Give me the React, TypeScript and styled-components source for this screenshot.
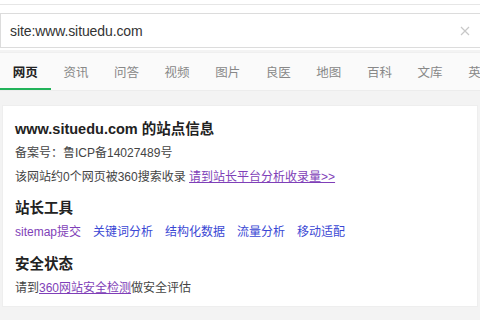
import React from "react";
import styled, { createGlobalStyle } from "styled-components";

const Global = createGlobalStyle`
  html, body { margin: 0; padding: 0; }
  body {
    width: 480px;
    height: 320px;
    overflow: hidden;
    background: #f3f3f3;
    font-family: "Liberation Sans", "Noto Sans CJK SC", Arial, sans-serif;
    color: #333;
  }
`;

const Header = styled.div`
  background: #fff;
  border-top: 4px solid #fff;
  box-shadow: inset 0 1px 0 #e6e6e6;
  padding: 9px 0 2px;
`;

const SearchBox = styled.div`
  height: 33px;
  border: 1px solid #dcdcdc;
  border-right: none;
  display: flex;
  align-items: center;
  padding: 0 8px 0 9px;
  background: #fff;
`;

const Query = styled.span`
  flex: 1;
  font-size: 14px;
  color: #333;
  letter-spacing: -0.1px;
`;

const Clear = styled.span`
  width: 10px;
  height: 10px;
  display: flex;
  color: #c8c8c8;
  margin-right: 2px;
`;

const TabBar = styled.div`
  display: flex;
  height: 37px;
  background: #fafafa;
  border-top: 1px solid #efefef;
  border-bottom: 1px solid #ececec;
  margin-top: 2px;
  overflow: hidden;
`;

const Tab = styled.div<{ $active?: boolean }>`
  flex: 0 0 50.6px;
  display: flex;
  align-items: center;
  justify-content: center;
  font-size: 12.5px;
  white-space: nowrap;
  color: ${(p) => (p.$active ? "#222" : "#888")};
  font-weight: ${(p) => (p.$active ? 700 : 400)};
  box-shadow: ${(p) => (p.$active ? "inset 0 -2px 0 #22b35a" : "none")};
`;

const Card = styled.div`
  background: #fff;
  margin: 14px 2px 0;
  border: 1px solid #eeeeee;
  padding: 14px 12px 10px;
  height: 176px;
`;

const Title = styled.div<{ $top?: number }>`
  font-size: 14.5px;
  font-weight: 700;
  color: #222;
  line-height: 18px;
  margin-top: ${(p) => p.$top ?? 0}px;
`;

const Line = styled.div<{ $top?: number }>`
  font-size: 12px;
  line-height: 16px;
  color: #444;
  margin-top: ${(p) => p.$top ?? 0}px;
  white-space: nowrap;
`;

const Link = styled.a<{ $visited?: boolean; $under?: boolean }>`
  color: ${(p) => (p.$visited ? "#7f3fb8" : "#3a47d4")};
  text-decoration: ${(p) => (p.$under ? "underline" : "none")};
  cursor: pointer;
`;

const Tools = styled.div`
  display: flex;
  gap: 12px;
  font-size: 12px;
  line-height: 16px;
  margin-top: 7px;
`;

const tabs = ["网页", "资讯", "问答", "视频", "图片", "良医", "地图", "百科", "文库", "英文"];

export default function App() {
  return (
    <>
      <Global />
      <Header>
        <SearchBox>
          <Query>site:www.situedu.com</Query>
          <Clear>
            <svg width="10" height="10" viewBox="0 0 10 10">
              <path d="M1 1L9 9M9 1L1 9" stroke="currentColor" strokeWidth="1.2" />
            </svg>
          </Clear>
        </SearchBox>
      </Header>
      <TabBar>
        {tabs.map((t, i) => (
          <Tab key={t} $active={i === 0}>
            {t}
          </Tab>
        ))}
      </TabBar>
      <Card>
        <Title>www.situedu.com 的站点信息</Title>
        <Line $top={7}>备案号：鲁ICP备14027489号</Line>
        <Line $top={8}>
          该网站约0个网页被360搜索收录 <Link $visited $under>请到站长平台分析收录量&gt;&gt;</Link>
        </Line>
        <Title $top={14}>站长工具</Title>
        <Tools>
          <Link $visited>sitemap提交</Link>
          <Link>关键词分析</Link>
          <Link>结构化数据</Link>
          <Link>流量分析</Link>
          <Link>移动适配</Link>
        </Tools>
        <Title $top={15}>安全状态</Title>
        <Line $top={7}>
          请到<Link $visited $under>360网站安全检测</Link>做安全评估
        </Line>
      </Card>
    </>
  );
}
